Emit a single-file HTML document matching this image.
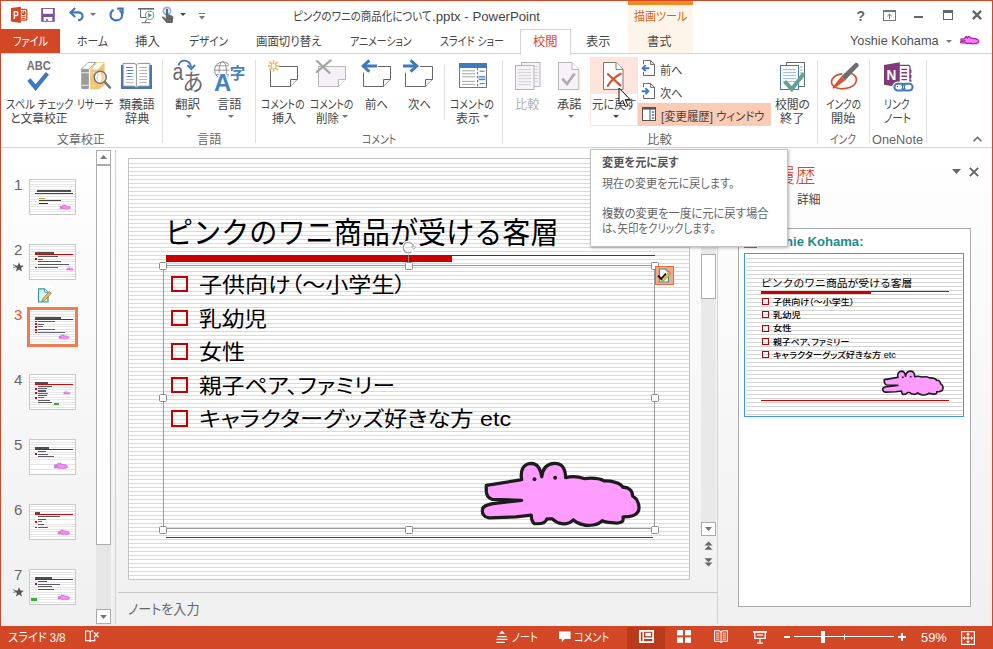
<!DOCTYPE html>
<html lang="ja">
<head>
<meta charset="utf-8">
<title>ピンクのワニの商品化について.pptx - PowerPoint</title>
<style>
html,body{margin:0;padding:0;}
body{width:993px;height:649px;overflow:hidden;background:#fff;font-family:"Liberation Sans","Noto Sans CJK JP",sans-serif;font-size:12px;color:#444;}
#win{position:relative;width:993px;height:649px;overflow:hidden;background:#fff;}
#win *{box-sizing:border-box;}
.abs{position:absolute;}
.t{position:absolute;white-space:nowrap;line-height:1;font-feature-settings:"palt";transform-origin:0 0;}
.c{text-align:center;}
svg{position:absolute;overflow:visible;}
/* window border */
#bl{left:0;top:0;width:1px;height:649px;background:#d24726;}
#br{left:992px;top:0;width:1px;height:649px;background:#d24726;}
#bt{left:0;top:0;width:993px;height:1px;background:#d24726;}
/* tabs */
.tab{font-size:12px;color:#444;top:35px;}
/* ribbon */
.rt{font-size:12px;color:#444;margin-top:1.5px;}
.rl{font-size:12px;color:#444;text-align:center;line-height:14px;white-space:nowrap;position:absolute;font-feature-settings:"palt";}
.gl{font-size:12px;color:#666;top:133.5px;}
.sep{position:absolute;top:60px;width:1px;height:83px;background:#e1e1e1;}
/* slide */
#slide{left:128px;top:158px;width:562px;height:422px;border:1px solid #c6c6c6;background:#fff repeating-linear-gradient(to bottom,#dadada 0,#dadada 1px,#fff 1px,#fff 4px);box-shadow:inset 0 1px 0 #fff;}
.sl{font-family:"Liberation Sans","Noto Sans CJK JP",sans-serif;color:#000;position:absolute;white-space:nowrap;line-height:1;transform-origin:0 0;}
.h{position:absolute;width:8px;height:8px;background:#fff;border:1px solid #8c8c8c;border-radius:1.5px;}
.bq{position:absolute;left:171px;width:17px;height:16.5px;border:2.3px solid #c40000;}
.th{width:47px;height:36px;border:1px solid #c9c9c9;background:#fff repeating-linear-gradient(to bottom,#fff 0,#fff 1.5px,#e6e6e6 1.5px,#e6e6e6 2.5px);}
.th i{position:absolute;display:block;}
i.abs{display:block;}
.num{font-size:15px;font-family:"Liberation Sans",sans-serif;}
#mini{background:#fff repeating-linear-gradient(to bottom,#fff 0,#fff 2px,#d4d4d4 2px,#d4d4d4 3px,#fff 3px,#fff 4px);}
.sb{position:absolute;color:#fff;font-size:12px;white-space:nowrap;line-height:1;font-feature-settings:"palt";}
</style>
</head>
<body>
<div id="win">

<!-- TITLE BAR -->
<div id="titlebar" class="abs" style="left:0;top:0;width:993px;height:29px;background:#fff;">
<!-- contextual tab header -->
<div class="abs" style="left:628px;top:0;width:65px;height:53px;background:#fef5ea;"></div>
<div class="abs" style="left:628px;top:0;width:65px;height:5px;background:#ee8a1e;"></div>
<div class="t" id="ctx" style="left:633.6px;top:11px;font-size:12px;color:#cf651a;transform:scaleX(0.919);">描画ツール</div>
<!-- PowerPoint icon -->
<svg style="left:10px;top:6px" width="18" height="18" viewBox="0 0 18 18">
<rect x="9" y="3.3" width="7.8" height="10.9" rx="1" fill="#fff" stroke="#d24726" stroke-width="1.3"/>
<circle cx="13.5" cy="7" r="2.2" fill="#d24726"/>
<path d="M13.5 7 L13.5 4.4 L11 4.4 L11 7 Z" fill="#fff"/>
<path d="M12.9 6.4 V4.6 A1.9 1.9 0 0 0 11.1 6.4 Z" fill="#d24726"/>
<rect x="11.4" y="10.2" width="4" height="0.9" fill="#d24726"/>
<rect x="11.4" y="12" width="4" height="0.9" fill="#d24726"/>
<path d="M0.9 2 L10.9 0.7 V16.9 L0.9 15.6 Z" fill="#d24726"/>
<text x="3.3" y="12.9" font-family="Liberation Sans, sans-serif" font-weight="bold" font-size="11" fill="#fff" textLength="5.4" lengthAdjust="spacingAndGlyphs">P</text>
</svg>
<!-- save -->
<svg style="left:41px;top:8px" width="14" height="14" viewBox="0 0 14 14">
<rect x="0.2" y="0" width="13.6" height="13.8" fill="#7d4fa3"/>
<rect x="2" y="0.9" width="9.9" height="4.9" fill="#fff"/>
<rect x="2.6" y="9" width="8.7" height="3.9" fill="#fff"/>
<rect x="5" y="11.2" width="1.8" height="1.7" fill="#7d4fa3"/>
</svg>
<!-- undo -->
<svg style="left:69px;top:7px" width="16" height="15" viewBox="0 0 16 15">
<path d="M2.2 5.4 H9 C12 5.4 13.6 7.3 13.6 9.3 C13.6 11.6 11.6 12.9 9.2 13.4" fill="none" stroke="#3b76c0" stroke-width="2.1" stroke-linecap="butt"/>
<path d="M6.2 0.9 L1.5 5.4 L6.2 9.9" fill="none" stroke="#3b76c0" stroke-width="2.1"/>
</svg>
<svg style="left:90px;top:13px" width="6" height="3" viewBox="0 0 6 3"><path d="M0 0 H6 L3 3 Z" fill="#777"/></svg>
<!-- redo -->
<svg style="left:109px;top:7px" width="16" height="15" viewBox="0 0 16 15">
<path d="M4.6 2.9 C2.6 4 1.5 5.9 1.5 7.9 C1.5 11 4 13.4 7.3 13.4 C10.6 13.4 13.1 11 13.1 7.9 C13.1 6 12.2 4.3 10.6 3.2" fill="none" stroke="#3b76c0" stroke-width="2.1"/>
<path d="M8.2 1.6 H13.6 V7" fill="none" stroke="#3b76c0" stroke-width="2.1"/>
</svg>
<!-- start slideshow -->
<svg style="left:138px;top:8px" width="17" height="16" viewBox="0 0 17 16">
<rect x="0" y="0" width="16" height="1.6" fill="#666"/>
<path d="M2.5 1.6 V9.5 H8" fill="none" stroke="#666" stroke-width="1"/>
<path d="M8.5 11.5 L7 14.5 M3.5 14.7 H12.5" fill="none" stroke="#666" stroke-width="1"/>
<circle cx="11.6" cy="7.3" r="4.1" fill="#fff" stroke="#777" stroke-width="0.9"/>
<path d="M10.2 4.9 L14 7.3 L10.2 9.7 Z" fill="#3e9c78"/>
</svg>
<!-- touch -->
<svg style="left:161px;top:6px" width="14" height="18" viewBox="0 0 14 18">
<circle cx="6" cy="5" r="3.6" fill="none" stroke="#8db3e0" stroke-width="1.8"/>
<path d="M4.8 3.6 C4.8 2.4 7.2 2.4 7.2 3.6 V8.6 L10.8 9.6 C12.2 10 12.4 11 12.2 12.4 L11.6 17 H5.6 L1.2 11.8 C0.6 10.8 1.8 10 2.8 10.8 L4.8 12.4 Z" fill="#666"/>
</svg>
<svg style="left:180px;top:13px" width="6" height="3" viewBox="0 0 6 3"><path d="M0 0 H6 L3 3 Z" fill="#444"/></svg>
<svg style="left:199px;top:13px" width="6" height="7" viewBox="0 0 6 7"><rect x="0" y="0" width="6" height="1" fill="#777"/><path d="M0 3 H6 L3 6.4 Z" fill="#777"/></svg>
<!-- title -->
<div class="t" id="ttl" style="left:293.0px;top:10.5px;font-size:12px;color:#444;transform:scaleX(0.875);">ピンクのワニの商品化について</div>
<div class="t" id="ttl2" style="left:431.5px;top:10.5px;font-size:12px;color:#444;transform:scaleX(1.102);">.pptx - PowerPoint</div>
<!-- window controls -->
<div class="t" style="left:856.5px;top:9px;font-size:14px;font-weight:bold;color:#666;font-family:'Liberation Sans',sans-serif;">?</div>
<svg style="left:883px;top:10px" width="13" height="11" viewBox="0 0 13 11">
<rect x="0.5" y="0.5" width="12" height="10" fill="none" stroke="#777" stroke-width="1"/>
<rect x="0.5" y="0.5" width="12" height="1.6" fill="#777"/>
<path d="M6.5 9 V4.2 M4.3 6.2 L6.5 4 L8.7 6.2" fill="none" stroke="#777" stroke-width="1"/>
</svg>
<div class="abs" style="left:914px;top:16px;width:9px;height:2px;background:#666;"></div>
<div class="abs" style="left:943px;top:10px;width:10px;height:10px;border:1px solid #666;border-top-width:3px;"></div>
<svg style="left:972px;top:10px" width="10" height="10" viewBox="0 0 10 10"><path d="M0.9 0.9 L9.1 9.1 M9.1 0.9 L0.9 9.1" stroke="#666" stroke-width="2.3" fill="none"/></svg>
</div>

<!-- TABS -->
<div id="tabs" class="abs" style="left:0;top:29px;width:993px;height:24px;">
<div class="abs" style="left:1px;top:0;width:59px;height:24px;background:#d24726;"></div>
<div class="t tab" id="tb0" style="left:12.5px;top:7.4px;color:#fff;transform:scaleX(0.842);">ファイル</div>
<div class="t tab" id="tb1" style="left:76.5px;top:7.4px;transform:scaleX(0.903);">ホーム</div>
<div class="t tab" id="tb2" style="left:135.2px;top:7.4px;transform:scaleX(1.033);">挿入</div>
<div class="t tab" id="tb3" style="left:188.5px;top:7.4px;transform:scaleX(0.887);">デザイン</div>
<div class="t tab" id="tb4" style="left:255.5px;top:7.4px;transform:scaleX(0.951);">画面切り替え</div>
<div class="t tab" id="tb5" style="left:350.0px;top:7.4px;transform:scaleX(0.823);">アニメーション</div>
<div class="t tab" id="tb6" style="left:439.5px;top:7.4px;transform:scaleX(0.837);">スライド ショー</div>
<div class="abs" style="left:520px;top:0px;width:51px;height:26px;background:#fff;border:1px solid #d4d4d4;border-bottom:none;z-index:3;"></div>
<div class="t tab" id="tb7" style="left:532.6px;top:7.4px;color:#d24726;z-index:4;transform:scaleX(1.016);">校閲</div>
<div class="t tab" id="tb8" style="left:585.6px;top:7.4px;transform:scaleX(1.016);">表示</div>
<div class="t tab" id="tb9" style="left:647.0px;top:7.4px;transform:scaleX(1.020);">書式</div>
<div class="t" id="usr" style="left:850.0px;top:5px;font-size:13px;color:#505050;transform:scaleX(0.978);">Yoshie Kohama</div>
<svg style="left:946px;top:10.5px" width="6" height="3" viewBox="0 0 6 3"><path d="M0 0 H6 L3 3 Z" fill="#777"/></svg>
<svg style="left:958.8px;top:6.2px" width="22.4" height="11.2" viewBox="0 0 993 496"><path d="M85 185 L270 155 C262 110 275 72 320 70 C352 70 368 95 375 140 C380 95 400 72 440 70 C480 68 498 95 500 145 C530 135 570 140 600 150 C630 145 680 148 700 162 C740 160 785 172 800 195 C830 192 850 215 850 240 C875 255 890 290 880 320 C870 340 845 350 800 350 C805 375 790 388 740 380 C720 378 700 375 690 370 C670 392 620 400 590 390 C565 385 550 375 540 365 C520 385 500 388 480 385 C455 382 440 370 430 360 L402 360 C395 378 385 388 335 385 C325 375 320 355 320 340 L240 350 L100 355 C75 352 62 335 65 312 C66 295 80 288 120 280 L270 263 L115 258 C95 250 85 240 85 215 Z" fill="#f57df5" stroke="#a51fa5" stroke-width="52" stroke-linejoin="round"/></svg>
</div>

<!-- RIBBON -->
<div id="ribbon" class="abs" style="left:0;top:53px;width:993px;height:95px;background:#fff;border-top:1px solid #d4d4d4;border-bottom:1px solid #d4d4d4;">
<div class="abs" style="left:0;top:-54px;width:993px;height:0;" id="rb">
<!-- separators -->
<div class="sep" style="left:162px;"></div>
<div class="sep" style="left:255px;"></div>
<div class="sep" style="left:444px;top:65px;height:55px;"></div>
<div class="sep" style="left:502px;"></div>
<div class="sep" style="left:817px;"></div>
<div class="sep" style="left:869px;"></div>
<div class="sep" style="left:926px;"></div>

<!-- 1 spell check -->
<svg style="left:26px;top:60px" width="26" height="32" viewBox="0 0 26 32">
<text x="0.8" y="10.4" font-family="Liberation Sans, sans-serif" font-weight="bold" font-size="12" fill="#707070" textLength="24" lengthAdjust="spacingAndGlyphs">ABC</text>
<path d="M2.9 19.6 L9.6 27.6 L21.4 13.4" fill="none" stroke="#3f79bd" stroke-width="4.2"/>
</svg>
<div class="t rt" id="r1" style="left:6.0px;top:97px;transform:scaleX(0.868);">スペル チェック</div>
<div class="t rt" id="r2" style="left:9.5px;top:111px;transform:scaleX(0.982);">と文章校正</div>

<!-- 2 research -->
<svg style="left:80px;top:60px" width="32" height="30" viewBox="0 0 32 30">
<path d="M1.2 9.3 L8.1 2.4 H15.7 L8.9 9.3 Z" fill="#fff" stroke="#9a9a9a" stroke-width="0.9"/>
<path d="M1.2 9.3 H8.9 V28.4 C6.6 29.4 3.4 29.4 1.2 28.4 Z" fill="#9b9b9b"/>
<rect x="1.2" y="12.1" width="7.7" height="1.2" fill="#dedede"/><rect x="1.2" y="24.8" width="7.7" height="1.2" fill="#dedede"/>
<path d="M10.1 9.3 L16.1 2.2 H24.6 V25 L19.4 29 C16 29.6 12.6 29.6 10.1 29 Z" fill="#efc577"/>
<path d="M11.2 9.6 L17 3 H23.6 L17.6 9.6 Z" fill="#fff"/>
<path d="M10.1 12.1 C12 13 14 13 15.6 12.4 M10.1 25.4 C12 26.3 14 26.3 15.6 25.8" fill="none" stroke="#f8e3b8" stroke-width="1"/>
<circle cx="20.2" cy="17.3" r="6" fill="#fff" stroke="#767676" stroke-width="1.6"/>
<path d="M18.2 13.6 C16.6 15.6 16.6 19 18.2 21 M20.6 12.8 C22.6 14.6 22.6 20 20.6 21.8 L22.8 21 C24.8 19 24.8 15.4 22.8 13.6 Z" fill="#f6dca6" stroke="#f0c97f" stroke-width="0.8"/>
<path d="M24.8 22 L30 27.6" stroke="#767676" stroke-width="2.5" stroke-linecap="round"/>
</svg>
<div class="t rt" id="r3" style="left:76.5px;top:97px;transform:scaleX(0.820);">リサーチ</div>

<!-- 3 thesaurus -->
<svg style="left:120px;top:61px" width="33" height="29" viewBox="0 0 33 29">
<rect x="1" y="4.1" width="31" height="23.9" fill="#3f79bd"/>
<path d="M3.1 2.4 H13 C14.6 2.4 15.8 3 16.4 3.9 C17 3 18.2 2.4 19.8 2.4 H29.7 V25.2 H20 C18.4 25.2 17 25.8 16.4 26.8 C15.8 25.8 14.4 25.2 12.8 25.2 H3.1 Z" fill="#fff" stroke="#808080" stroke-width="0.9"/>
<path d="M16.4 3.9 V26.8" stroke="#8a8a8a" stroke-width="0.9"/>
<g stroke="#a0a0a0" stroke-width="0.75">
<path d="M6 9.5 H13.7 M6 12.5 H13.7 M6 15.5 H13.7 M6 18.5 H13.7 M6 21.6 H13.7"/>
<path d="M19.3 6.5 H27 M19.3 9.5 H27 M19.3 12.5 H27 M19.3 15.5 H27 M19.3 18.5 H27 M19.3 21.6 H27"/>
</g>
<path d="M6 6.5 H12" stroke="#d9532f" stroke-width="0.9"/><path d="M12 6.5 H13.7" stroke="#a0a0a0" stroke-width="0.75"/>
<path d="M7.8 9.5 H13.2 M7.8 12.5 H12 M7.8 15.5 H11" stroke="#3f79bd" stroke-width="0.9"/>
</svg>
<div class="t rt" id="r4" style="left:118.6px;top:97px;transform:scaleX(0.994);">類義語</div>
<div class="t rt" id="r5" style="left:124.6px;top:111px;transform:scaleX(1.016);">辞典</div>
<div class="t gl" id="g1" style="left:57.0px;transform:scaleX(1.000);">文章校正</div>

<!-- 4 translate -->
<svg style="left:172px;top:58.3px" width="32" height="34" viewBox="0 0 32 34">
<text x="0.6" y="21.8" font-family="Liberation Sans, sans-serif" font-size="23.5" fill="#6a6a6a" textLength="10.8" lengthAdjust="spacingAndGlyphs">a</text>
<text x="10.6" y="32.2" font-family="Liberation Sans,'Noto Sans CJK JP', sans-serif" font-size="23" fill="#6a6a6a" textLength="21" lengthAdjust="spacingAndGlyphs">あ</text>
<path d="M6.4 7.6 C8.4 0.8 17.6 0.6 19.2 9.4" fill="none" stroke="#3f79bd" stroke-width="1.9"/>
<path d="M15.4 7.2 L19.3 11.2 L23 7" fill="none" stroke="#3f79bd" stroke-width="1.9"/>
</svg>
<div class="t rt" id="r6" style="left:175.0px;top:97px;transform:scaleX(1.041);">翻訳</div>
<svg style="left:186px;top:115px" width="6" height="3" viewBox="0 0 6 3"><path d="M0 0 H6 L3 3 Z" fill="#777"/></svg>

<!-- 5 language -->
<svg style="left:213px;top:61px" width="33" height="32" viewBox="0 0 33 32">
<circle cx="9.8" cy="9.2" r="8.3" fill="#fff" stroke="#8a8a8a" stroke-width="1"/>
<ellipse cx="9.8" cy="9.2" rx="3.7" ry="8.3" fill="none" stroke="#8a8a8a" stroke-width="0.9"/>
<path d="M1.5 9.2 H18.1 M2.6 4.8 H17 M2.6 13.6 H17" stroke="#8a8a8a" stroke-width="0.9"/>
<rect x="15.8" y="3.6" width="17" height="17" fill="#fff"/>
<text x="1" y="29.8" font-family="Liberation Sans, sans-serif" font-weight="bold" font-size="23.4" fill="#4581c4" stroke="#fff" stroke-width="2.4" paint-order="stroke" textLength="17.2" lengthAdjust="spacingAndGlyphs">A</text>
<text x="16.8" y="18" font-family="Liberation Sans,'Noto Sans CJK JP', sans-serif" font-weight="bold" font-size="15.5" fill="#4581c4">字</text>
</svg>
<div class="t rt" id="r7" style="left:217.4px;top:97px;transform:scaleX(1.024);">言語</div>
<svg style="left:228px;top:115px" width="6" height="3" viewBox="0 0 6 3"><path d="M0 0 H6 L3 3 Z" fill="#777"/></svg>
<div class="t gl" id="g2" style="left:197.2px;transform:scaleX(1.012);">言語</div>

<!-- 6 new comment -->
<svg style="left:267px;top:59px" width="32" height="29" viewBox="0 0 32 29">
<path d="M3.5 7.5 H30.5 V20.5 L23.5 27.5 H3.5 Z" fill="#fff" stroke="#666" stroke-width="1"/>
<path d="M23.5 27.5 V20.5 H30.5" fill="#f3f3f3" stroke="#666" stroke-width="1"/>
<circle cx="6.6" cy="7" r="5.4" fill="#fff"/>
<g stroke="#e9b756" stroke-width="1.5"><path d="M6.6 1.2 V12.8 M0.8 7 H12.4 M2.5 2.9 L10.7 11.1 M10.7 2.9 L2.5 11.1"/></g>
<circle cx="6.6" cy="7" r="1.9" fill="#fff"/>
</svg>
<div class="t rt" id="r8" style="left:261.0px;top:97px;transform:scaleX(0.815);">コメントの</div>
<div class="t rt" id="r9" style="left:271.6px;top:111px;transform:scaleX(1.008);">挿入</div>

<!-- 7 delete comment -->
<svg style="left:315px;top:59px" width="32" height="29" viewBox="0 0 32 29">
<path d="M3.5 7.5 H30.5 V20.5 L23.5 27.5 H3.5 Z" fill="#f5f0f7" stroke="#b9b9b9" stroke-width="1"/>
<path d="M23.5 27.5 V20.5 H30.5" fill="#fff" stroke="#b9b9b9" stroke-width="1"/>
<path d="M2 2 L14.6 14 M15.6 1.4 L1.8 13" stroke="#a3a3a3" stroke-width="2.2" stroke-linecap="round"/>
</svg>
<div class="t rt" id="r10" style="left:309.6px;top:97px;transform:scaleX(0.813);">コメントの</div>
<div class="t rt" id="r11" style="left:315.6px;top:111px;transform:scaleX(0.954);">削除</div>
<svg style="left:342px;top:115px" width="6" height="3" viewBox="0 0 6 3"><path d="M0 0 H6 L3 3 Z" fill="#777"/></svg>

<!-- 8 prev -->
<svg style="left:360px;top:59px" width="32" height="29" viewBox="0 0 32 29">
<path d="M3.5 7.5 H30.5 V20.5 L23.5 27.5 H3.5 Z" fill="#fff" stroke="#666" stroke-width="1"/>
<path d="M23.5 27.5 V20.5 H30.5" fill="#f3f3f3" stroke="#666" stroke-width="1"/>
<rect x="0" y="1" width="18" height="12.6" fill="#fff"/>
<path d="M3 7 H17" stroke="#3f79bd" stroke-width="3"/>
<path d="M9.4 1.4 L3.2 7 L9.4 12.6" fill="none" stroke="#3f79bd" stroke-width="3"/>
</svg>
<div class="t rt" id="r12" style="left:365.4px;top:97px;transform:scaleX(0.955);">前へ</div>

<!-- 9 next -->
<svg style="left:402px;top:59px" width="32" height="29" viewBox="0 0 32 29">
<path d="M3.5 7.5 H30.5 V20.5 L23.5 27.5 H3.5 Z" fill="#fff" stroke="#666" stroke-width="1"/>
<path d="M23.5 27.5 V20.5 H30.5" fill="#f3f3f3" stroke="#666" stroke-width="1"/>
<rect x="0" y="1" width="18" height="12.6" fill="#fff"/>
<path d="M1 7 H15" stroke="#3f79bd" stroke-width="3"/>
<path d="M8.6 1.4 L14.8 7 L8.6 12.6" fill="none" stroke="#3f79bd" stroke-width="3"/>
</svg>
<div class="t rt" id="r13" style="left:407.6px;top:97px;transform:scaleX(0.947);">次へ</div>

<!-- 10 show comments -->
<svg style="left:459px;top:63px" width="28" height="25" viewBox="0 0 28 25">
<rect x="0.5" y="0.5" width="27" height="24" fill="#fff" stroke="#777" stroke-width="1"/>
<rect x="0" y="0" width="28" height="5" fill="#3f79bd"/>
<path d="M3 7.8 H16 M3 10.8 H16 M3 13.8 H16 M3 18.4 H16 M3 21.4 H16" stroke="#9a9a9a" stroke-width="0.9"/>
<path d="M18.6 5 V24" stroke="#555" stroke-width="0.9" stroke-dasharray="2.4 1.6"/>
<rect x="19" y="12.6" width="8" height="5" fill="#c7d9ee"/>
<path d="M20.6 8.2 H25.6 M20 13.8 H26 M20 16.4 H26 M20.6 20.6 H25.6" stroke="#3f79bd" stroke-width="1"/>
</svg>
<div class="t rt" id="r14" style="left:450.2px;top:97px;transform:scaleX(0.821);">コメントの</div>
<div class="t rt" id="r15" style="left:456.0px;top:111px;transform:scaleX(0.999);">表示</div>
<svg style="left:483px;top:115px" width="6" height="3" viewBox="0 0 6 3"><path d="M0 0 H6 L3 3 Z" fill="#777"/></svg>
<div class="t gl" id="g3" style="left:361.6px;transform:scaleX(0.823);">コメント</div>

<!-- 11 compare (disabled) -->
<svg style="left:515px;top:62px" width="26" height="29" viewBox="0 0 26 29">
<rect x="6.5" y="0.5" width="18.5" height="24" fill="#f6f2f8" stroke="#b5b5b5" stroke-width="1"/>
<path d="M19.6 4.6 H23 M19.6 7.6 H23 M19.6 10.6 H23 M19.6 13.6 H23 M19.6 16.6 H23 M19.6 19.6 H23" stroke="#cfcfcf" stroke-width="0.9"/>
<rect x="0.5" y="3.5" width="18.5" height="24" fill="#f6f2f8" stroke="#b5b5b5" stroke-width="1"/>
<path d="M3 7.6 H16 M3 10.6 H16 M3 13.6 H16 M3 16.6 H16 M3 19.6 H16 M3 22.6 H16" stroke="#cfcfcf" stroke-width="0.9"/>
</svg>
<div class="t rt" id="r16" style="left:515.2px;top:97px;color:#b0b0b0;transform:scaleX(1.012);">比較</div>

<!-- 12 accept -->
<svg style="left:558px;top:62px" width="22" height="29" viewBox="0 0 22 29">
<path d="M0.5 0.5 H14 L20.8 7.4 V27.6 H0.5 Z" fill="#f6f2f8" stroke="#b5b5b5" stroke-width="1"/>
<path d="M14 0.5 V7.4 H20.8" fill="#fff" stroke="#b5b5b5" stroke-width="1"/>
<path d="M4.4 16.6 L9 22 L16.6 11.4" fill="none" stroke="#ababab" stroke-width="2.6"/>
</svg>
<div class="t rt" id="r17" style="left:557.0px;top:97px;transform:scaleX(1.020);">承諾</div>
<svg style="left:568px;top:115px" width="6" height="3" viewBox="0 0 6 3"><path d="M0 0 H6 L3 3 Z" fill="#777"/></svg>

<!-- 13 reject split button (hover) -->
<div class="abs" style="left:590px;top:57px;width:48px;height:69px;background:#fde4dc;"></div>
<div class="abs" style="left:591px;top:94px;width:46px;height:31px;background:#fff;"></div>
<svg style="left:602px;top:61px" width="23" height="30" viewBox="0 0 23 30">
<path d="M1.5 1.5 H14 L21 8.4 V28.4 H1.5 Z" fill="#fff" stroke="#787878" stroke-width="1"/>
<path d="M14 1.5 V8.4 H21" fill="#fff" stroke="#787878" stroke-width="1"/>
<path d="M6 13.2 L18.4 24.4 M18.8 12.8 C13 15.8 8.8 20 5.8 24.8" fill="none" stroke="#d9532f" stroke-width="2.2" stroke-linecap="round"/>
</svg>
<div class="t rt" id="r18" style="left:591.6px;top:97px;transform:scaleX(0.946);">元に戻す</div>
<svg style="left:613px;top:115px" width="6" height="3" viewBox="0 0 6 3"><path d="M0 0 H6 L3 3 Z" fill="#444"/></svg>

<!-- small buttons -->
<svg style="left:641px;top:60px" width="15" height="16" viewBox="0 0 15 16">
<path d="M4.5 0.5 H9.6 L13.5 4.4 V15.5 H2.5 V12" fill="#fff" stroke="#666" stroke-width="1"/>
<path d="M2.5 4.4 V0.5 H4.5" fill="none" stroke="#666" stroke-width="1"/>
<path d="M9.6 0.5 V4.4 H13.5" fill="none" stroke="#666" stroke-width="1"/>
<rect x="0" y="4.6" width="8.6" height="7.4" fill="#fff"/>
<path d="M1.4 8.2 H8.4 M4.6 5.2 L1.6 8.2 L4.6 11.2" fill="none" stroke="#3f79bd" stroke-width="1.9"/>
</svg>
<div class="t rt" id="r19" style="left:660.0px;top:63px;transform:scaleX(0.930);">前へ</div>
<svg style="left:641px;top:83px" width="15" height="16" viewBox="0 0 15 16">
<path d="M4.5 0.5 H9.6 L13.5 4.4 V15.5 H2.5 V12" fill="#fff" stroke="#666" stroke-width="1"/>
<path d="M2.5 4.4 V0.5 H4.5" fill="none" stroke="#666" stroke-width="1"/>
<path d="M9.6 0.5 V4.4 H13.5" fill="none" stroke="#666" stroke-width="1"/>
<rect x="0" y="4.6" width="8.6" height="7.4" fill="#fff"/>
<path d="M0.6 8.2 H7.6 M4.4 5.2 L7.4 8.2 L4.4 11.2" fill="none" stroke="#3f79bd" stroke-width="1.9"/>
</svg>
<div class="t rt" id="r20" style="left:660.0px;top:86px;transform:scaleX(0.930);">次へ</div>
<div class="abs" style="left:638px;top:103px;width:133px;height:23px;background:#fbcbb5;"></div>
<svg style="left:642px;top:107px" width="14" height="14" viewBox="0 0 14 14">
<rect x="0.5" y="0.5" width="13" height="13" fill="#fff" stroke="#555" stroke-width="1"/>
<rect x="0" y="0" width="14" height="2.6" fill="#555"/>
<path d="M8 2 V14" stroke="#555" stroke-width="1"/>
<path d="M9.8 5 H12.2 M9.8 8 H12.2 M9.8 11 H12.2" stroke="#3f79bd" stroke-width="1.6"/>
</svg>
<div class="t rt" id="r21" style="left:661.0px;top:109px;transform:scaleX(0.949);">[変更履歴] ウィンドウ</div>
<div class="t gl" id="g4" style="left:646.6px;transform:scaleX(1.037);">比較</div>

<!-- 16 end review -->
<svg style="left:779px;top:61px" width="28" height="31" viewBox="0 0 28 31">
<rect x="7.5" y="1.5" width="18" height="24" fill="#fff" stroke="#666" stroke-width="1"/>
<path d="M21 6 H23.6 M21 9 H23.6 M21 12 H23.6 M21 15 H23.6 M21 18 H23.6" stroke="#999" stroke-width="0.9"/>
<rect x="1.5" y="4.5" width="18" height="24" fill="#fff" stroke="#3f79bd" stroke-width="1"/>
<path d="M4 8.6 H17 M4 11.6 H17 M4 14.6 H17 M4 17.6 H17 M4 20.6 H17" stroke="#8fb2dc" stroke-width="0.9"/>
<path d="M5.6 20.4 L12.8 28.2 L25 12.4" fill="none" stroke="#62a38d" stroke-width="4"/>
</svg>
<div class="t rt" id="r22" style="left:774.6px;top:97px;transform:scaleX(0.981);">校閲の</div>
<div class="t rt" id="r23" style="left:779.6px;top:111px;transform:scaleX(1.016);">終了</div>

<!-- 17 ink -->
<svg style="left:828px;top:60px" width="32" height="32" viewBox="0 0 32 32">
<path d="M13.6 13.8 C4 15.4 0.8 22.4 6 26.6 C12 30.6 25 29 28 22 C29.6 17.4 26.4 14 21.4 13" fill="none" stroke="#d9532f" stroke-width="1.7" stroke-linecap="round"/>
<path d="M27.1 3.2 C28.6 1.8 31.6 4.4 30.4 6.2 L17.1 20.6 L13.3 16.6 Z" fill="#6e6e6e"/>
<path d="M13.3 16.6 L17.1 20.6 L6.4 28.2 C5 29 4.2 28.2 4.8 27 Z" fill="#d9532f"/>
</svg>
<div class="t rt" id="r24" style="left:825.6px;top:97px;transform:scaleX(0.801);">インクの</div>
<div class="t rt" id="r25" style="left:831.2px;top:111px;transform:scaleX(1.012);">開始</div>
<div class="t gl" id="g5" style="left:830.2px;transform:scaleX(0.812);">インク</div>

<!-- 18 linked notes -->
<svg style="left:883px;top:62px" width="31" height="32" viewBox="0 0 31 32">
<path d="M13 3.4 H25.4 C26.6 3.4 27 4 27 5 V22 H13 Z" fill="#fff" stroke="#80397b" stroke-width="1.2"/>
<path d="M18.4 7.4 H24 M18.4 10.8 H24 M18.4 14.2 H24 M18.4 17.6 H24" stroke="#80397b" stroke-width="1.4"/>
<rect x="26.6" y="7.4" width="1.8" height="3.6" fill="#80397b"/><rect x="26.6" y="12.6" width="1.8" height="3.6" fill="#80397b"/><rect x="26.6" y="17.8" width="1.8" height="3" fill="#80397b"/>
<path d="M1 3 L16.8 0.2 V25.6 L1 22.8 Z" fill="#80397b"/>
<text x="3.6" y="18" font-family="Liberation Sans, sans-serif" font-weight="bold" font-size="14" fill="#fff" textLength="9.8" lengthAdjust="spacingAndGlyphs">N</text>
<g fill="none" stroke="#fff" stroke-width="4.6"><rect x="11.4" y="21.8" width="10.6" height="6.6" rx="3.3"/><rect x="19" y="21.8" width="10.6" height="6.6" rx="3.3"/></g>
<g fill="none" stroke="#3f79bd" stroke-width="2"><rect x="11.4" y="21.8" width="10.6" height="6.6" rx="3.3"/><rect x="19" y="21.8" width="10.6" height="6.6" rx="3.3"/></g>
<path d="M15 25.1 H19 M22 25.1 H26" stroke="#fff" stroke-width="2.4"/>
</svg>
<div class="t rt" id="r26" style="left:884.0px;top:97px;transform:scaleX(0.816);">リンク</div>
<div class="t rt" id="r27" style="left:884.0px;top:111px;transform:scaleX(0.885);">ノート</div>
<div class="t gl" id="g6" style="left:872.0px;transform:scaleX(1.062);">OneNote</div>

<svg style="left:973px;top:136px" width="9" height="6" viewBox="0 0 9 6"><path d="M0.6 5.2 L4.5 1.2 L8.4 5.2" fill="none" stroke="#666" stroke-width="1.5"/></svg>
</div>
</div>

<!-- WORKSPACE -->
<!--WORK-->
<div id="work" class="abs" style="left:1px;top:148px;width:991px;height:478px;background:linear-gradient(to bottom,#fff 0,#f0f0f0 100%);">
<div class="abs" id="wk" style="left:-1px;top:-148px;width:0;height:0;">
<div class="abs th" style="left:29px;top:179px;"><i style="left:7px;top:10.4px;width:34px;height:2px;background:#333;opacity:.85"></i><i style="left:5px;top:12.6px;width:38px;height:1px;background:#e00000"></i><i style="left:9px;top:17.6px;width:6px;height:1px;background:#c9a23a"></i><i style="left:9px;top:20px;width:22px;height:1px;background:#444"></i><i style="left:9px;top:23px;width:9px;height:1px;background:#333"></i></div>
<svg style="left:58.8px;top:204px" width="13" height="6.5" viewBox="0 0 993 496"><path d="M85 185 L270 155 C262 110 275 72 320 70 C352 70 368 95 375 140 C380 95 400 72 440 70 C480 68 498 95 500 145 C530 135 570 140 600 150 C630 145 680 148 700 162 C740 160 785 172 800 195 C830 192 850 215 850 240 C875 255 890 290 880 320 C870 340 845 350 800 350 C805 375 790 388 740 380 C720 378 700 375 690 370 C670 392 620 400 590 390 C565 385 550 375 540 365 C520 385 500 388 480 385 C455 382 440 370 430 360 L402 360 C395 378 385 388 335 385 C325 375 320 355 320 340 L240 350 L100 355 C75 352 62 335 65 312 C66 295 80 288 120 280 L270 263 L115 258 C95 250 85 240 85 215 Z" fill="#f58cf5" stroke="#c867c8" stroke-width="50"/></svg>
<div class="t num" style="left:14px;top:177px;color:#666;">1</div>
<div class="abs th" style="left:29px;top:244px;"><i style="left:5px;top:6.5px;width:19px;height:2px;background:#333;opacity:.85"></i><i style="left:5px;top:9px;width:38px;height:1px;background:#e00000"></i><i style="left:8px;top:10.8px;width:20px;height:1.2px;background:#333;opacity:.8"></i><i style="left:5px;top:13.25px;width:1.6px;height:1.8px;background:#e00000"></i><i style="left:8px;top:13.55px;width:5px;height:1.2px;background:#3a3a6a;opacity:.8"></i><i style="left:8px;top:16.3px;width:23px;height:1.2px;background:#333;opacity:.8"></i><i style="left:8px;top:19.05px;width:31px;height:1.2px;background:#333;opacity:.8"></i><i style="left:5px;top:21.5px;width:1.6px;height:1.8px;background:#e00000"></i><i style="left:8px;top:21.8px;width:20px;height:1.2px;background:#3a3a6a;opacity:.8"></i></div>
<svg style="left:65.6px;top:267px" width="8.5" height="4.25" viewBox="0 0 993 496"><path d="M85 185 L270 155 C262 110 275 72 320 70 C352 70 368 95 375 140 C380 95 400 72 440 70 C480 68 498 95 500 145 C530 135 570 140 600 150 C630 145 680 148 700 162 C740 160 785 172 800 195 C830 192 850 215 850 240 C875 255 890 290 880 320 C870 340 845 350 800 350 C805 375 790 388 740 380 C720 378 700 375 690 370 C670 392 620 400 590 390 C565 385 550 375 540 365 C520 385 500 388 480 385 C455 382 440 370 430 360 L402 360 C395 378 385 388 335 385 C325 375 320 355 320 340 L240 350 L100 355 C75 352 62 335 65 312 C66 295 80 288 120 280 L270 263 L115 258 C95 250 85 240 85 215 Z" fill="#f58cf5" stroke="#c867c8" stroke-width="50"/></svg>
<div class="t num" style="left:14px;top:242px;color:#666;">2</div>
<div class="abs" style="left:27px;top:307px;width:51px;height:40px;background:#f07b52;"></div>
<div class="abs th" style="left:29px;top:309px;border-color:#f07b52;"><i style="left:5px;top:6.5px;width:26px;height:2px;background:#333;opacity:.85"></i><i style="left:5px;top:9px;width:38px;height:1px;background:#e00000"></i><i style="left:5px;top:10.5px;width:1.6px;height:1.8px;background:#e00000"></i><i style="left:8px;top:10.8px;width:17px;height:1.2px;background:#3a3a6a;opacity:.8"></i><i style="left:5px;top:13.25px;width:1.6px;height:1.8px;background:#e00000"></i><i style="left:8px;top:13.55px;width:6px;height:1.2px;background:#3a3a6a;opacity:.8"></i><i style="left:5px;top:16px;width:1.6px;height:1.8px;background:#e00000"></i><i style="left:8px;top:16.3px;width:5px;height:1.2px;background:#3a3a6a;opacity:.8"></i><i style="left:5px;top:18.75px;width:1.6px;height:1.8px;background:#e00000"></i><i style="left:8px;top:19.05px;width:17px;height:1.2px;background:#3a3a6a;opacity:.8"></i><i style="left:5px;top:21.5px;width:1.6px;height:1.8px;background:#e00000"></i><i style="left:8px;top:21.8px;width:27px;height:1.2px;background:#3a3a6a;opacity:.8"></i></div>
<svg style="left:57.8px;top:334px" width="12.4" height="6.2" viewBox="0 0 993 496"><path d="M85 185 L270 155 C262 110 275 72 320 70 C352 70 368 95 375 140 C380 95 400 72 440 70 C480 68 498 95 500 145 C530 135 570 140 600 150 C630 145 680 148 700 162 C740 160 785 172 800 195 C830 192 850 215 850 240 C875 255 890 290 880 320 C870 340 845 350 800 350 C805 375 790 388 740 380 C720 378 700 375 690 370 C670 392 620 400 590 390 C565 385 550 375 540 365 C520 385 500 388 480 385 C455 382 440 370 430 360 L402 360 C395 378 385 388 335 385 C325 375 320 355 320 340 L240 350 L100 355 C75 352 62 335 65 312 C66 295 80 288 120 280 L270 263 L115 258 C95 250 85 240 85 215 Z" fill="#f58cf5" stroke="#c867c8" stroke-width="50"/></svg>
<div class="t num" style="left:14px;top:307px;color:#e0552e;">3</div>
<div class="abs th" style="left:29px;top:374px;"><i style="left:5px;top:6.5px;width:13px;height:2px;background:#333;opacity:.85"></i><i style="left:5px;top:9px;width:38px;height:1px;background:#e00000"></i><i style="left:8px;top:10.8px;width:14px;height:1.2px;background:#333;opacity:.8"></i><i style="left:5px;top:12.8px;width:1.6px;height:1.8px;background:#e00000"></i><i style="left:8px;top:13.1px;width:9px;height:1.2px;background:#3a3a6a;opacity:.8"></i><i style="left:8px;top:15.4px;width:8px;height:1.2px;background:#333;opacity:.8"></i><i style="left:5px;top:17.4px;width:1.6px;height:1.8px;background:#e00000"></i><i style="left:8px;top:17.7px;width:10px;height:1.2px;background:#3a3a6a;opacity:.8"></i><i style="left:8px;top:20px;width:9px;height:1.2px;background:#333;opacity:.8"></i><i style="left:5px;top:22px;width:1.6px;height:1.8px;background:#e00000"></i><i style="left:8px;top:22.3px;width:6px;height:1.2px;background:#3a3a6a;opacity:.8"></i><i style="left:8px;top:24.6px;width:12px;height:1.2px;background:#333;opacity:.8"></i><i style="left:8px;top:26.9px;width:14px;height:1.2px;background:#333;opacity:.8"></i></div>
<svg style="left:63px;top:391.4px" width="8" height="4" viewBox="0 0 993 496"><path d="M85 185 L270 155 C262 110 275 72 320 70 C352 70 368 95 375 140 C380 95 400 72 440 70 C480 68 498 95 500 145 C530 135 570 140 600 150 C630 145 680 148 700 162 C740 160 785 172 800 195 C830 192 850 215 850 240 C875 255 890 290 880 320 C870 340 845 350 800 350 C805 375 790 388 740 380 C720 378 700 375 690 370 C670 392 620 400 590 390 C565 385 550 375 540 365 C520 385 500 388 480 385 C455 382 440 370 430 360 L402 360 C395 378 385 388 335 385 C325 375 320 355 320 340 L240 350 L100 355 C75 352 62 335 65 312 C66 295 80 288 120 280 L270 263 L115 258 C95 250 85 240 85 215 Z" fill="#f58cf5" stroke="#c867c8" stroke-width="50"/></svg>
<div class="t num" style="left:14px;top:372px;color:#666;">4</div>
<div class="abs th" style="left:29px;top:439px;"><i style="left:5px;top:6.5px;width:14px;height:2px;background:#333;opacity:.85"></i><i style="left:5px;top:9px;width:38px;height:1px;background:#e00000"></i><i style="left:8px;top:10.8px;width:8px;height:1.2px;background:#333;opacity:.8"></i><i style="left:5px;top:13.25px;width:1.6px;height:1.8px;background:#e00000"></i><i style="left:8px;top:13.55px;width:10px;height:1.2px;background:#3a3a6a;opacity:.8"></i><i style="left:8px;top:16.3px;width:16px;height:1.2px;background:#333;opacity:.8"></i></div>
<svg style="left:52.9px;top:461.5px" width="16.6" height="8.3" viewBox="0 0 993 496"><path d="M85 185 L270 155 C262 110 275 72 320 70 C352 70 368 95 375 140 C380 95 400 72 440 70 C480 68 498 95 500 145 C530 135 570 140 600 150 C630 145 680 148 700 162 C740 160 785 172 800 195 C830 192 850 215 850 240 C875 255 890 290 880 320 C870 340 845 350 800 350 C805 375 790 388 740 380 C720 378 700 375 690 370 C670 392 620 400 590 390 C565 385 550 375 540 365 C520 385 500 388 480 385 C455 382 440 370 430 360 L402 360 C395 378 385 388 335 385 C325 375 320 355 320 340 L240 350 L100 355 C75 352 62 335 65 312 C66 295 80 288 120 280 L270 263 L115 258 C95 250 85 240 85 215 Z" fill="#f58cf5" stroke="#c867c8" stroke-width="50"/></svg>
<div class="t num" style="left:14px;top:437px;color:#666;">5</div>
<div class="abs th" style="left:29px;top:504px;"><i style="left:5px;top:6.5px;width:5px;height:2px;background:#333;opacity:.85"></i><i style="left:5px;top:9px;width:38px;height:1px;background:#e00000"></i><i style="left:8px;top:10.8px;width:22px;height:1.2px;background:#333;opacity:.8"></i><i style="left:8px;top:13.55px;width:8px;height:1.2px;background:#333;opacity:.8"></i><i style="left:5px;top:16px;width:1.6px;height:1.8px;background:#e00000"></i><i style="left:8px;top:16.3px;width:4px;height:1.2px;background:#3a3a6a;opacity:.8"></i><i style="left:8px;top:19.05px;width:6px;height:1.2px;background:#333;opacity:.8"></i><i style="left:5px;top:21.5px;width:1.6px;height:1.8px;background:#e00000"></i><i style="left:8px;top:21.8px;width:10px;height:1.2px;background:#3a3a6a;opacity:.8"></i></div>
<svg style="left:57.4px;top:529px" width="14.2" height="7.1" viewBox="0 0 993 496"><path d="M85 185 L270 155 C262 110 275 72 320 70 C352 70 368 95 375 140 C380 95 400 72 440 70 C480 68 498 95 500 145 C530 135 570 140 600 150 C630 145 680 148 700 162 C740 160 785 172 800 195 C830 192 850 215 850 240 C875 255 890 290 880 320 C870 340 845 350 800 350 C805 375 790 388 740 380 C720 378 700 375 690 370 C670 392 620 400 590 390 C565 385 550 375 540 365 C520 385 500 388 480 385 C455 382 440 370 430 360 L402 360 C395 378 385 388 335 385 C325 375 320 355 320 340 L240 350 L100 355 C75 352 62 335 65 312 C66 295 80 288 120 280 L270 263 L115 258 C95 250 85 240 85 215 Z" fill="#f58cf5" stroke="#c867c8" stroke-width="50"/></svg>
<div class="t num" style="left:14px;top:502px;color:#666;">6</div>
<div class="abs th" style="left:29px;top:569px;"><i style="left:5px;top:6.5px;width:17px;height:2px;background:#333;opacity:.85"></i><i style="left:5px;top:9px;width:38px;height:1px;background:#e00000"></i><i style="left:8px;top:10.8px;width:9px;height:1.2px;background:#333;opacity:.8"></i><i style="left:5px;top:13.25px;width:1.6px;height:1.8px;background:#e00000"></i><i style="left:8px;top:13.55px;width:22px;height:1.2px;background:#3a3a6a;opacity:.8"></i><i style="left:8px;top:16.3px;width:14px;height:1.2px;background:#333;opacity:.8"></i><i style="left:8px;top:19.05px;width:16px;height:1.2px;background:#333;opacity:.8"></i></div>
<svg style="left:57.4px;top:594px" width="14.2" height="7.1" viewBox="0 0 993 496"><path d="M85 185 L270 155 C262 110 275 72 320 70 C352 70 368 95 375 140 C380 95 400 72 440 70 C480 68 498 95 500 145 C530 135 570 140 600 150 C630 145 680 148 700 162 C740 160 785 172 800 195 C830 192 850 215 850 240 C875 255 890 290 880 320 C870 340 845 350 800 350 C805 375 790 388 740 380 C720 378 700 375 690 370 C670 392 620 400 590 390 C565 385 550 375 540 365 C520 385 500 388 480 385 C455 382 440 370 430 360 L402 360 C395 378 385 388 335 385 C325 375 320 355 320 340 L240 350 L100 355 C75 352 62 335 65 312 C66 295 80 288 120 280 L270 263 L115 258 C95 250 85 240 85 215 Z" fill="#f58cf5" stroke="#c867c8" stroke-width="50"/></svg>
<div class="t num" style="left:14px;top:567px;color:#666;">7</div>
<i class="abs" style="left:53.5px;top:403px;width:5px;height:2px;background:#2db52d"></i>
<i class="abs" style="left:31px;top:598px;width:6px;height:2.5px;background:#2db52d"></i>
<svg style="left:13px;top:262px" width="11" height="10" viewBox="0 0 11 10"><path d="M6 0.3 L7.3 3.6 L10.8 3.8 L8.1 6 L9 9.5 L6 7.5 L3 9.5 L3.9 6 L1.2 3.8 L4.7 3.6 Z" fill="#555"/><path d="M0 2.6 L3 4 M0.2 5.4 L2.6 5" stroke="#555" stroke-width="0.8"/></svg>
<svg style="left:13px;top:587px" width="11" height="10" viewBox="0 0 11 10"><path d="M6 0.3 L7.3 3.6 L10.8 3.8 L8.1 6 L9 9.5 L6 7.5 L3 9.5 L3.9 6 L1.2 3.8 L4.7 3.6 Z" fill="#555"/><path d="M0 2.6 L3 4 M0.2 5.4 L2.6 5" stroke="#555" stroke-width="0.8"/></svg>
<div class="abs" style="left:33px;top:285px;width:21px;height:19px;background:#fff;"></div>
<svg style="left:37px;top:288px" width="15" height="15" viewBox="0 0 15 15"><path d="M1.5 0.8 H7.6 L11 4.2 V14 H1.5 Z" fill="#dff1f1" stroke="#2a9c9c" stroke-width="1.2"/><path d="M7.6 0.8 V4.2 H11" fill="#fff" stroke="#2a9c9c" stroke-width="0.9"/><path d="M12.6 3.4 L14.4 5.2 L7.6 12.6 L5 13.6 L5.8 10.8 Z" fill="#e9c35a" stroke="#8a6d2a" stroke-width="0.7"/><path d="M12.6 3.4 L14.4 5.2 L13.4 6.2 L11.6 4.4 Z" fill="#e98a7a"/></svg>
<div class="abs" style="left:96px;top:150px;width:15px;height:475px;background:#e6e6e6;"></div>
<div class="abs" style="left:96px;top:150px;width:15px;height:15px;background:#fff;border:1px solid #ababab;"></div>
<svg style="left:100px;top:155px" width="7" height="4" viewBox="0 0 7 4"><path d="M0 4 H7 L3.5 0 Z" fill="#777"/></svg>
<div class="abs" style="left:96px;top:165px;width:15px;height:380px;background:#fff;border:1px solid #ababab;"></div>
<div class="abs" style="left:96px;top:609px;width:15px;height:15px;background:#fff;border:1px solid #ababab;"></div>
<svg style="left:100px;top:615px" width="7" height="4" viewBox="0 0 7 4"><path d="M0 0 H7 L3.5 4 Z" fill="#777"/></svg>
<div class="abs" style="left:115px;top:150px;width:1px;height:474px;background:#d0d0d0;"></div>
<div id="slide" class="abs"></div>
<div class="sl" id="s0" style="left:165.0px;top:218px;font-size:29.5px;transform:scaleX(0.953);">ピンクのワニ商品が受ける客層</div>
<div class="abs" style="left:166px;top:255px;width:286px;height:7px;background:#c80000;"></div>
<div class="abs" style="left:452px;top:255px;width:203px;height:1px;background:#d00000;"></div>
<div class="abs" style="left:166px;top:536.5px;width:487px;height:1px;background:#cc1010;"></div>
<div class="abs" style="left:163px;top:265px;width:492px;height:264px;border:1px solid #9a9a9a;"></div>
<div class="bq" style="top:275.5px;"></div>
<div class="sl" id="s1" style="left:198.5px;top:273.8px;font-size:21px;font-feature-settings:'palt';transform:scaleX(1.098);">子供向け（～小学生）</div>
<div class="bq" style="top:309.5px;"></div>
<div class="sl" id="s2" style="left:198.5px;top:307.8px;font-size:21px;font-feature-settings:'palt';transform:scaleX(1.079);">乳幼児</div>
<div class="bq" style="top:343px;"></div>
<div class="sl" id="s3" style="left:198.5px;top:341.3px;font-size:21px;font-feature-settings:'palt';transform:scaleX(1.095);">女性</div>
<div class="bq" style="top:376.5px;"></div>
<div class="sl" id="s4" style="left:198.5px;top:374.8px;font-size:21px;font-feature-settings:'palt';transform:scaleX(1.082);">親子ペア、ファミリー</div>
<div class="bq" style="top:410px;"></div>
<div class="sl" id="s5" style="left:198.5px;top:408.3px;font-size:21px;font-feature-settings:'palt';transform:scaleX(1.107);">キャラクターグッズ好きな方 etc</div>
<svg style="left:470px;top:450px" width="190" height="94.9043" viewBox="0 0 993 496"><path d="M85 185 L270 155 C262 110 275 72 320 70 C352 70 368 95 375 140 C380 95 400 72 440 70 C480 68 498 95 500 145 C530 135 570 140 600 150 C630 145 680 148 700 162 C740 160 785 172 800 195 C830 192 850 215 850 240 C875 255 890 290 880 320 C870 340 845 350 800 350 C805 375 790 388 740 380 C720 378 700 375 690 370 C670 392 620 400 590 390 C565 385 550 375 540 365 C520 385 500 388 480 385 C455 382 440 370 430 360 L402 360 C395 378 385 388 335 385 C325 375 320 355 320 340 L240 350 L100 355 C75 352 62 335 65 312 C66 295 80 288 120 280 L270 263 L115 258 C95 250 85 240 85 215 Z" fill="#ff9cff" stroke="#1c1c1c" stroke-width="17" stroke-linejoin="round"/><circle cx="337" cy="153" r="10" fill="#1c1c1c"/><circle cx="445" cy="145" r="10" fill="#1c1c1c"/></svg>
<div class="h" style="left:159px;top:262px;"></div>
<div class="h" style="left:405px;top:262px;"></div>
<div class="h" style="left:651px;top:262px;"></div>
<div class="h" style="left:159px;top:394px;"></div>
<div class="h" style="left:651px;top:394px;"></div>
<div class="h" style="left:159px;top:526px;"></div>
<div class="h" style="left:405px;top:526px;"></div>
<div class="h" style="left:651px;top:526px;"></div>
<div class="abs" style="left:408px;top:254px;width:1px;height:8px;background:#8c8c8c;"></div>
<svg style="left:401.3px;top:240px" width="15" height="15" viewBox="0 0 15 15"><circle cx="7.5" cy="7.5" r="5.2" fill="none" stroke="#fff" stroke-width="3.4"/><path d="M12.5 6.4 A5.2 5.2 0 1 0 10.6 11.7" fill="none" stroke="#a2a2a2" stroke-width="1.3"/><path d="M10.4 6.6 L14.6 6.8 L12.8 9.6 Z" fill="#fff" stroke="#a2a2a2" stroke-width="0.8"/></svg>
<div class="abs" style="left:655px;top:266px;width:19px;height:19px;background:#f6a88c;border:1px solid #f2683c;"></div>
<svg style="left:657px;top:268px" width="15" height="15" viewBox="0 0 15 15"><path d="M2.5 1 H8.4 L11.4 4 V14 H2.5 Z" fill="#fff" stroke="#2a9c9c" stroke-width="1.2"/><path d="M1 7.6 L4.4 11 L9 5.6" fill="none" stroke="#111" stroke-width="2"/><path d="M12.2 3.6 L14 5.4 L7.4 12.4 L4.8 13.4 L5.6 10.6 Z" fill="#e9c35a" stroke="#8a6d2a" stroke-width="0.6"/><path d="M12.2 3.6 L14 5.4 L13 6.4 L11.2 4.6 Z" fill="#e98a7a"/></svg>
<div class="abs" style="left:701px;top:150px;width:15px;height:386px;background:#e9e9e9;"></div>
<div class="abs" style="left:701px;top:254px;width:15px;height:45px;background:#fff;border:1px solid #ababab;"></div>
<div class="abs" style="left:701px;top:522px;width:15px;height:14px;background:#fff;border:1px solid #ababab;"></div>
<svg style="left:705px;top:527px" width="7" height="4" viewBox="0 0 7 4"><path d="M0 0 H7 L3.5 4 Z" fill="#777"/></svg>
<svg style="left:704px;top:541px" width="9" height="9" viewBox="0 0 9 9"><path d="M0.5 4.4 H8.5 L4.5 0.4 Z M0.5 8.8 H8.5 L4.5 4.8 Z" fill="#666"/></svg>
<svg style="left:704px;top:558px" width="9" height="9" viewBox="0 0 9 9"><path d="M0.5 0.2 H8.5 L4.5 4.2 Z M0.5 4.6 H8.5 L4.5 8.6 Z" fill="#666"/></svg>
<div class="abs" style="left:717px;top:150px;width:1px;height:474px;background:#d0d0d0;"></div>
<div class="abs" style="left:118px;top:592px;width:599px;height:1px;background:#c8c8c8;"></div>
<div class="t" id="nt" style="left:127.5px;top:602px;font-size:14px;color:#666;transform:scaleX(0.934);">ノートを入力</div>
<div class="t" id="pt" style="left:733.6px;top:166px;font-size:20px;font-weight:300;color:#d24726;transform:scaleX(1.020);">変更履歴</div>
<div class="t" id="pd0" style="left:745.0px;top:194px;font-size:12px;color:#444;transform:scaleX(0.945);">スライド</div>
<div class="t" id="pd" style="left:797.4px;top:194px;font-size:12px;color:#444;transform:scaleX(0.983);">詳細</div>
<svg style="left:952px;top:169px" width="9" height="5" viewBox="0 0 9 5"><path d="M0 0 H9 L4.5 5 Z" fill="#666"/></svg>
<svg style="left:969px;top:167px" width="10" height="10" viewBox="0 0 10 10"><path d="M0.8 0.8 L9.2 9.2 M9.2 0.8 L0.8 9.2" stroke="#666" stroke-width="1.9" fill="none"/></svg>
<div class="abs" style="left:738px;top:228px;width:233px;height:379px;background:#fff;border:1px solid #a9a9b0;"></div>
<div class="abs" style="left:744px;top:235px;width:13px;height:13px;border:1px solid #2a9c9c;border-bottom-width:2px;background:#fff;"></div>
<div class="t" id="pu" style="left:762.0px;top:235px;font-size:13px;font-weight:bold;color:#1e8c8c;transform:scaleX(1.006);">Yoshie Kohama:</div>
<div class="abs" style="left:744px;top:253px;width:220px;height:164px;border:1px solid #3c96f0;background:#fff;"></div>
<div class="abs" id="mini" style="left:746px;top:256px;width:216px;height:159px;"></div>
<div class="sl" id="m0" style="left:761.0px;top:277.5px;font-size:10.6px;transform:scaleX(1.021);">ピンクのワニ商品が受ける客層</div>
<div class="abs" style="left:760.5px;top:290.8px;width:110px;height:3.6px;background:#c80000;"></div>
<div class="abs" style="left:870px;top:291.2px;width:79px;height:1px;background:#d00000;"></div>
<div class="abs" style="left:760.5px;top:399.6px;width:188.5px;height:1px;background:#d00000;"></div>
<div class="abs" style="left:762px;top:298px;width:6.8px;height:6.8px;border:1.2px solid #c00000;"></div>
<div class="sl" id="m1" style="left:772.6px;top:297.5px;font-size:8.4px;font-weight:500;font-feature-settings:'palt';transform:scaleX(1.083);">子供向け（～小学生）</div>
<div class="abs" style="left:762px;top:311.2px;width:6.8px;height:6.8px;border:1.2px solid #c00000;"></div>
<div class="sl" id="m2" style="left:772.6px;top:310.7px;font-size:8.4px;font-weight:500;font-feature-settings:'palt';transform:scaleX(1.099);">乳幼児</div>
<div class="abs" style="left:762px;top:324.8px;width:6.8px;height:6.8px;border:1.2px solid #c00000;"></div>
<div class="sl" id="m3" style="left:772.6px;top:324.3px;font-size:8.4px;font-weight:500;font-feature-settings:'palt';transform:scaleX(1.110);">女性</div>
<div class="abs" style="left:762px;top:338px;width:6.8px;height:6.8px;border:1.2px solid #c00000;"></div>
<div class="sl" id="m4" style="left:772.6px;top:337.5px;font-size:8.4px;font-weight:500;font-feature-settings:'palt';transform:scaleX(1.055);">親子ペア、ファミリー</div>
<div class="abs" style="left:762px;top:351.3px;width:6.8px;height:6.8px;border:1.2px solid #c00000;"></div>
<div class="sl" id="m5" style="left:772.6px;top:350.8px;font-size:8.4px;font-weight:500;font-feature-settings:'palt';transform:scaleX(1.094);">キャラクターグッズ好きな方 etc</div>
<svg style="left:877.5px;top:366.4px" width="73" height="36.4632" viewBox="0 0 993 496"><path d="M85 185 L270 155 C262 110 275 72 320 70 C352 70 368 95 375 140 C380 95 400 72 440 70 C480 68 498 95 500 145 C530 135 570 140 600 150 C630 145 680 148 700 162 C740 160 785 172 800 195 C830 192 850 215 850 240 C875 255 890 290 880 320 C870 340 845 350 800 350 C805 375 790 388 740 380 C720 378 700 375 690 370 C670 392 620 400 590 390 C565 385 550 375 540 365 C520 385 500 388 480 385 C455 382 440 370 430 360 L402 360 C395 378 385 388 335 385 C325 375 320 355 320 340 L240 350 L100 355 C75 352 62 335 65 312 C66 295 80 288 120 280 L270 263 L115 258 C95 250 85 240 85 215 Z" fill="#ff9cff" stroke="#1c1c1c" stroke-width="22" stroke-linejoin="round"/><circle cx="337" cy="153" r="12" fill="#1c1c1c"/><circle cx="445" cy="145" r="12" fill="#1c1c1c"/></svg>
<div class="abs" style="left:590px;top:149px;width:198px;height:98px;background:#fff;border:1px solid #c3c3c3;box-shadow:1px 1px 3px rgba(0,0,0,0.28);"></div>
<div class="t" id="tt0" style="left:602.0px;top:156.5px;font-size:12px;font-weight:bold;color:#555;transform:scaleX(0.934);">変更を元に戻す</div>
<div class="t" id="tt1" style="left:602.0px;top:177.5px;font-size:12px;color:#666;transform:scaleX(0.926);">現在の変更を元に戻します。</div>
<div class="t" id="tt2" style="left:602.0px;top:207.5px;font-size:12px;color:#666;transform:scaleX(0.943);">複数の変更を一度に元に戻す場合</div>
<div class="t" id="tt3" style="left:602.0px;top:222.5px;font-size:12px;color:#666;transform:scaleX(0.868);">は、矢印をクリックします。</div>
</div>
</div>
<!--/WORK-->

<!-- STATUS BAR -->
<div id="status" class="abs" style="left:0;top:626px;width:993px;height:23px;background:#d24726;">
<div class="sb" id="st0" style="left:7.5px;top:5.5px;transform-origin:0 0;transform:scaleX(0.939);">スライド 3/8</div>
<svg style="left:85px;top:4px" width="15" height="13" viewBox="0 0 15 13">
<path d="M0.6 1 H3.6 C4.6 1 5.2 1.6 5.2 2.4 V12 C5.2 11.2 4.6 10.6 3.6 10.6 H0.6 Z" fill="none" stroke="#fff" stroke-width="1.1"/>
<path d="M5.2 2.4 C5.2 1.6 5.8 1 6.8 1 H8.4 M5.2 12 C5.2 11.2 5.8 10.6 6.8 10.6 H9.8 V8.6" fill="none" stroke="#fff" stroke-width="1.1"/>
<path d="M9 2.4 L13.4 7.2 M13.4 2.4 L9 7.2" stroke="#fff" stroke-width="1.4"/>
</svg>
<!-- notes -->
<svg style="left:496px;top:4px" width="12" height="14" viewBox="0 0 12 14">
<path d="M6 0.4 L9 3.8 H3 Z" fill="#fff"/>
<path d="M1.4 6.6 H10.6 M0.4 9.4 H11.6 M0.4 12.4 H9" stroke="#fff" stroke-width="1.3"/>
</svg>
<div class="sb" id="st1" style="left:512.3px;top:5.5px;transform-origin:0 0;transform:scaleX(0.842);">ノート</div>
<svg style="left:559px;top:5px" width="12" height="12" viewBox="0 0 12 12"><path d="M0 0.6 H11.6 V8 H5.6 L2.8 11.4 V8 H0 Z" fill="#fff"/></svg>
<div class="sb" id="st2" style="left:574.0px;top:5.5px;transform-origin:0 0;transform:scaleX(0.842);">コメント</div>
<!-- view buttons -->
<div class="abs" style="left:627px;top:1px;width:38px;height:22px;background:#b93b1c;"></div>
<svg style="left:639px;top:4px" width="15" height="13" viewBox="0 0 15 13">
<rect x="0.9" y="0.9" width="13.2" height="11.2" fill="none" stroke="#fff" stroke-width="1.8"/>
<path d="M4.2 1 V12 M4.2 8.2 H14" stroke="#fff" stroke-width="1.5"/>
<rect x="6.4" y="2.8" width="5.6" height="3.4" fill="#fff"/>
</svg>
<svg style="left:677px;top:4px" width="14" height="13" viewBox="0 0 14 13">
<rect x="0" y="0" width="6" height="5.4" fill="#fff"/><rect x="8" y="0" width="6" height="5.4" fill="#fff"/>
<rect x="0" y="7.4" width="6" height="5.4" fill="#fff"/><rect x="8" y="7.4" width="6" height="5.4" fill="#fff"/>
</svg>
<svg style="left:714px;top:4px" width="14" height="14" viewBox="0 0 14 14">
<path d="M0.6 0.8 H5.4 L7 2 L8.6 0.8 H13.4 V11.2 H8.6 L7 12.6 L5.4 11.2 H0.6 Z" fill="none" stroke="#fff" stroke-width="1.1"/>
<path d="M7 2 V12.6" stroke="#fff" stroke-width="1"/>
<path d="M2.2 3.2 H5.4 M2.2 5.2 H5.4 M2.2 7.2 H5.4 M2.2 9.2 H5.4 M8.6 3.2 H11.8 M8.6 5.2 H11.8 M8.6 7.2 H11.8 M8.6 9.2 H11.8" stroke="#fff" stroke-width="0.9"/>
</svg>
<svg style="left:753px;top:5px" width="14" height="13" viewBox="0 0 14 13">
<rect x="0" y="0" width="14" height="1.8" fill="#fff"/>
<path d="M1.8 1.8 V7.4 H12.2 V1.8" fill="none" stroke="#fff" stroke-width="1.3"/>
<path d="M4 4 H10" stroke="#fff" stroke-width="1.2"/>
<path d="M7 7.4 V12 M4 12.2 H10" stroke="#fff" stroke-width="1.2"/>
</svg>
<!-- zoom -->
<div class="abs" style="left:784px;top:9.6px;width:6px;height:2.2px;background:#fff;"></div>
<div class="abs" style="left:794px;top:10.3px;width:100px;height:1px;background:#fff;"></div>
<div class="abs" style="left:844px;top:7.5px;width:1px;height:6px;background:#fff;"></div>
<div class="abs" style="left:821px;top:5px;width:4px;height:12px;background:#fff;"></div>
<div class="abs" style="left:898px;top:9.6px;width:8px;height:2.2px;background:#fff;"></div>
<div class="abs" style="left:900.9px;top:6.7px;width:2.2px;height:8px;background:#fff;"></div>
<div class="sb" id="st3" style="left:921.0px;top:5px;font-size:13px;transform-origin:0 0;transform:scaleX(0.991);">59%</div>
<svg style="left:961px;top:5px" width="14" height="14" viewBox="0 0 14 14">
<rect x="0.6" y="0.6" width="12.8" height="12.8" fill="none" stroke="#fff" stroke-width="1.2"/>
<path d="M7 1.6 L5 3.8 H9 Z M7 12.4 L5 10.2 H9 Z M1.6 7 L3.8 5 V9 Z M12.4 7 L10.2 5 V9 Z" fill="#fff"/>
<path d="M7 3 V11 M3 7 H11" stroke="#fff" stroke-width="1"/>
</svg>
</div>

<svg style="left:618px;top:87px;z-index:20" width="13" height="21" viewBox="0 0 13 21"><path d="M1 1 V17 L4.8 13.4 L7.4 19.6 L9.8 18.6 L7.2 12.6 H12.2 Z" fill="#fff" stroke="#111" stroke-width="1"/></svg>
<div id="bl" class="abs"></div><div id="br" class="abs"></div><div id="bt" class="abs"></div>
</div>
</body>
</html>
